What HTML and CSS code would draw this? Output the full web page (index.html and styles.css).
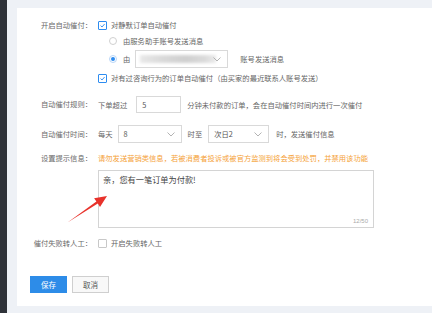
FILE: index.html
```html
<!DOCTYPE html>
<html lang="zh">
<head>
<meta charset="utf-8">
<link rel="stylesheet" href="styles.css">
</head>
<body>
<div class="page">
  <div class="sidebar"></div>
  <div class="gutter"></div>
  <div class="main">
    <div class="topband"></div>
    <div class="panel">
      <div class="form">
        <div class="row row-open">
          <div class="label">开启自动催付：</div>
          <div class="content col">
            <div class="line la">
              <span class="cb checked"><svg viewBox="0 0 9 9"><polyline points="2,4.6 3.9,6.4 7.2,2.6" fill="none" stroke="#2d8cf0" stroke-width="1.2"/></svg></span>
              <span class="txt">对静默订单自动催付</span>
            </div>
            <div class="line lb sub">
              <span class="radio"></span>
              <span class="txt">由服务助手账号发送消息</span>
            </div>
            <div class="line lc sub">
              <span class="radio on"></span>
              <span class="txt">由</span>
              <span class="select sel-acc">
                <span class="blurred"></span>
                <svg class="chev" viewBox="0 0 8 5"><polyline points="0.5,0.5 4,4 7.5,0.5" fill="none" stroke="#aaa" stroke-width="0.9"/></svg>
              </span>
              <span class="txt after-acc">账号发送消息</span>
            </div>
            <div class="line ld">
              <span class="cb checked"><svg viewBox="0 0 9 9"><polyline points="2,4.6 3.9,6.4 7.2,2.6" fill="none" stroke="#2d8cf0" stroke-width="1.2"/></svg></span>
              <span class="txt">对有过咨询行为的订单自动催付（由买家的最近联系人账号发送）</span>
            </div>
          </div>
        </div>

        <div class="row row-rule">
          <div class="label">自动催付规则：</div>
          <div class="content inline">
            <span class="txt">下单超过</span>
            <span class="input inp-min">5</span>
            <span class="txt">分钟未付款的订单，会在自动催付时间内进行一次催付</span>
          </div>
        </div>

        <div class="row row-time">
          <div class="label">自动催付时间：</div>
          <div class="content inline">
            <span class="txt">每天</span>
            <span class="select sel-from"><span class="val">8</span><svg class="chev" viewBox="0 0 8 5"><polyline points="0.5,0.5 4,4 7.5,0.5" fill="none" stroke="#aaa" stroke-width="0.9"/></svg></span>
            <span class="txt t-to">时至</span>
            <span class="select sel-to"><span class="val">次日2</span><svg class="chev" viewBox="0 0 8 5"><polyline points="0.5,0.5 4,4 7.5,0.5" fill="none" stroke="#aaa" stroke-width="0.9"/></svg></span>
            <span class="txt t-send">时，发送催付信息</span>
          </div>
        </div>

        <div class="row row-hint">
          <div class="label">设置提示信息：</div>
          <div class="content col">
            <div class="warn">请勿发送营销类信息，若被消费者投诉或被官方监测到将会受到处罚，并禁用该功能</div>
            <div class="textarea">
              <div class="ta-text">亲，您有一笔订单为付款!</div>
              <div class="counter">12/50</div>
            </div>
          </div>
        </div>

        <div class="row row-fail">
          <div class="label">催付失败转人工：</div>
          <div class="content inline">
            <span class="cb"></span>
            <span class="txt">开启失败转人工</span>
          </div>
        </div>

        <div class="buttons">
          <span class="btn primary">保存</span>
          <span class="btn">取消</span>
        </div>
      </div>
    </div>
    <div class="bottomband"></div>
  </div>
</div>
<svg class="arrow" width="432" height="313" viewBox="0 0 432 313">
  <polygon points="67.5,222.5 96.4,201.4 94.1,198.2 107,196 100,207 97.8,203.6" fill="#e8322b"/>
</svg>
</body>
</html>
```

FILE: styles.css
```css
html, body {
  margin: 0;
  padding: 0;
}
body {
  width: 432px;
  height: 313px;
  overflow: hidden;
  font-family: "Noto Sans CJK SC", "Noto Sans", sans-serif;
  font-size: 7.3px;
  color: #666;
  position: relative;
}
.page {
  display: flex;
  height: 313px;
}
.sidebar {
  width: 7px;
  background: #2e3239;
  flex: none;
}
.gutter {
  width: 10px;
  background: #eef1f6;
  flex: none;
}
.main {
  flex: 1;
  display: flex;
  flex-direction: column;
}
.topband {
  height: 8px;
  background: #eef1f6;
  flex: none;
}
.panel {
  flex: 1;
  background: #fff;
}
.bottomband {
  height: 7px;
  background: #eef1f6;
  flex: none;
}
.form {
  padding: 12px 0 0 15px;
}
.row {
  display: flex;
  align-items: flex-start;
}
.label {
  width: 60px;
  text-align: right;
  flex: none;
  line-height: 10px;
  white-space: nowrap;
  color: #6a6a6a;
}
.content {
  margin-left: 6px;
}
.col {
  display: flex;
  flex-direction: column;
}
.inline {
  display: flex;
  align-items: center;
  white-space: nowrap;
}
.line {
  display: flex;
  align-items: center;
  white-space: nowrap;
  height: 10px;
}
.txt {
  line-height: 10px;
}
.sub {
  padding-left: 11px;
}
.lb { margin-top: 6px; }
.lc { margin-top: 4px; height: 18px; }
.ld { margin-top: 5px; }

.cb {
  width: 9px;
  height: 9px;
  box-sizing: border-box;
  border: 1px solid #c8c8c8;
  border-radius: 1px;
  background: #fff;
  margin-right: 4px;
  flex: none;
  display: flex;
}
.cb.checked {
  border-color: #2d8cf0;
}
.cb svg {
  width: 7px;
  height: 7px;
}
.radio {
  width: 8px;
  height: 8px;
  box-sizing: border-box;
  border: 1px solid #d0d0d0;
  border-radius: 50%;
  margin-right: 6px;
  flex: none;
  display: flex;
  align-items: center;
  justify-content: center;
}
.radio.on {
  border-color: #b9d6f7;
}
.radio.on::after {
  content: "";
  width: 4px;
  height: 4px;
  border-radius: 50%;
  background: #2d8cf0;
}

.select, .input {
  box-sizing: border-box;
  height: 18px;
  border: 1px solid #d9d9d9;
  background: #fff;
  display: flex;
  align-items: center;
  position: relative;
  color: #555;
}
.chev {
  position: absolute;
  right: 6px;
  top: 6px;
  width: 8px;
  height: 5px;
}
.sel-acc {
  width: 93px;
  margin-left: 5px;
}
.blurred {
  margin-left: 4px;
  width: 76px;
  height: 8px;
  background: linear-gradient(90deg, #e8e8e8 0%, #d9d9d9 30%, #cfcfcf 60%, #dadada 85%, #eaeaea 100%);
  filter: blur(1.5px);
}
.after-acc {
  margin-left: 12px;
}
.row-rule {
  margin-top: 13px;
}
.row-rule .label, .row-time .label {
  line-height: 17px;
}
.input {
  height: 17px;
  padding-left: 5px;
}
.inp-min {
  width: 45px;
  margin: 0 6px 0 9px;
}
.row-time {
  margin-top: 12px;
}
.row-time .label {
  line-height: 18px;
}
.val {
  padding-left: 5px;
}
.sel-from {
  width: 64px;
  margin-left: 5px;
}
.t-to {
  margin-left: 6px;
}
.sel-to {
  width: 61px;
  margin-left: 6px;
}
.t-send {
  margin-left: 7px;
}
.row-hint {
  margin-top: 10px;
}
.warn {
  color: #f5a238;
  line-height: 10px;
  white-space: nowrap;
}
.textarea {
  margin-top: 7px;
  width: 276px;
  height: 58px;
  box-sizing: border-box;
  border: 1px solid #d4d4d4;
  position: relative;
}
.ta-text {
  font-size: 8.2px;
  color: #444;
  padding: 3px 0 0 4px;
  line-height: 10px;
}
.counter {
  position: absolute;
  right: 5px;
  bottom: 3px;
  font-family: "Liberation Sans", Arial, sans-serif;
  font-size: 6px;
  color: #aaa;
}
.row-fail {
  margin-top: 10px;
}
.row-fail .cb {
  margin-right: 4px;
}
.buttons {
  margin-top: 28px;
  margin-left: -2px;
  display: flex;
  gap: 5px;
}
.btn {
  width: 37px;
  height: 17px;
  box-sizing: border-box;
  border: 1px solid #cfcfcf;
  background: #f8f8f8;
  color: #555;
  display: flex;
  align-items: center;
  justify-content: center;
  font-size: 7.5px;
}
.btn.primary {
  background: #2d8ce8;
  border-color: #2d8ce8;
  color: #fff;
}
.arrow {
  position: absolute;
  left: 0;
  top: 0;
  pointer-events: none;
}
```
